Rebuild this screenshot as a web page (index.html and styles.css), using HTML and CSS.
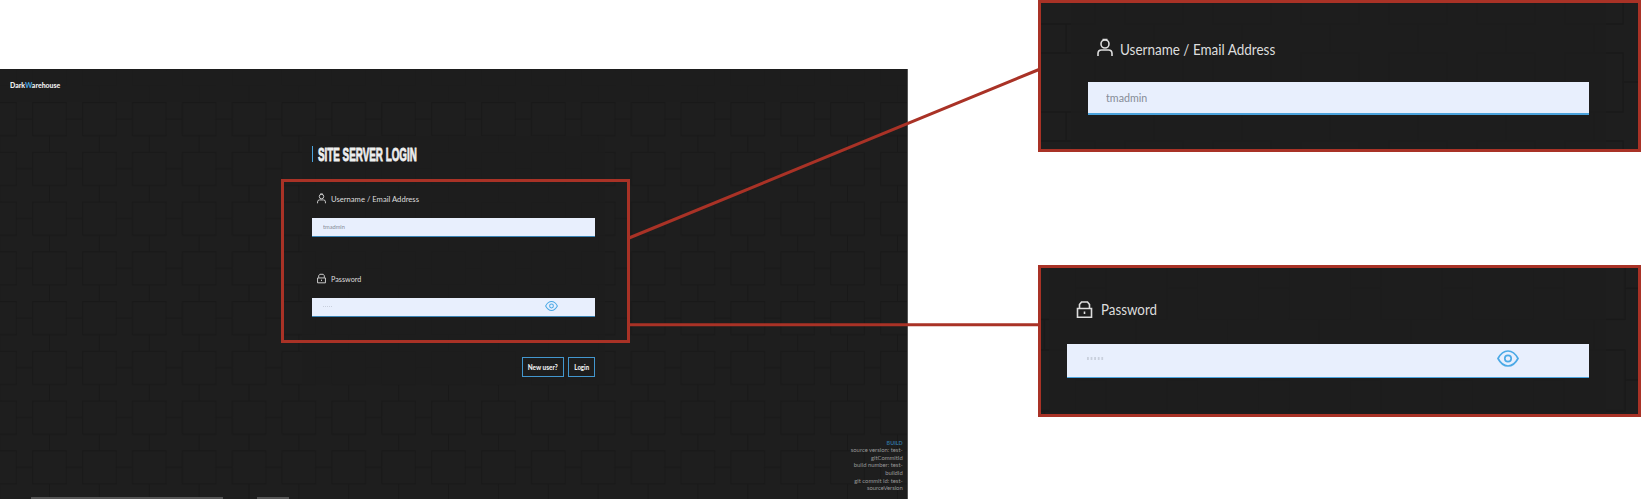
FILE: index.html
```html
<!DOCTYPE html>
<html lang="en">
<head>
<meta charset="utf-8">
<title>DarkWarehouse – Site Server Login</title>
<link rel="stylesheet" href="styles.css">
</head>
<body>
<svg class="defs" width="0" height="0" aria-hidden="true">
  <defs>
    <symbol id="user" viewBox="0 0 16 19"><circle cx="8" cy="6" r="4"/><path d="M5.500 1.500h5M1 18v-2.500q0-3.500 3.500-3.500h7q3.500 0 3.500 3.500V18"/></symbol>
    <symbol id="lock" viewBox="0 0 16 17"><path d="M1 7.500h14v8.700H1zM3 7V3.500L5 1h6l2 2.500V7"/><path d="M8 10.500v2.500"/></symbol>
    <symbol id="eye" viewBox="0 0 22 17"><path d="M1 8.500Q5 1 11 1t10 7.500Q17 16 11 16T1 8.500z"/><circle cx="11" cy="8.500" r="3.200"/></symbol>
    <pattern id="tiles" width="49.880" height="49.750" patternUnits="userSpaceOnUse" patternTransform="translate(32 33)">
      <path d="M.7.700h33.500v33H.7zM34 17h16M17.500 34v16" fill="none" stroke="#191919" stroke-width="1.200"/>
    </pattern>
    <pattern id="tiles-user" width="88" height="88" patternUnits="userSpaceOnUse" patternTransform="translate(83 49)">
      <path d="M1 1h58v59H1zM60 30h28M30 60v28" fill="none" stroke="#191919" stroke-width="1.600"/>
    </pattern>
    <pattern id="tiles-pass" width="91.600" height="91.600" patternUnits="userSpaceOnUse" patternTransform="translate(64 81)">
      <path d="M1 1h61v61H1zM62 31h30M31 62v30" fill="none" stroke="#191919" stroke-width="1.600"/>
    </pattern>
  </defs>
</svg>
<main class="board">
  <section class="shot">
    <svg class="backdrop"><rect width="100%" height="100%" fill="url(#tiles)"/></svg>
    <header class="topbar"><span class="brand">Dark<b>W</b>arehouse</span></header>
    <form class="login">
      <h1 class="title"><span>SITE SERVER LOGIN</span></h1>
      <label class="caption"><svg class="icon"><use href="#user"/></svg><span class="username-text">Username / Email Address</span></label>
      <div class="field"><span>tmadmin</span></div>
      <label class="caption second"><svg class="icon"><use href="#lock"/></svg><span class="password-text">Password</span></label>
      <div class="field"><i class="dots"></i><svg class="eye"><use href="#eye"/></svg></div>
      <div class="actions"><div class="btn new"><span>New user?</span></div><div class="btn enter"><span>Login</span></div></div>
    </form>
    <footer class="build"><b>BUILD</b><br>source version: test-<br>gitCommitId<br>build number: test-<br>buildId<br>git commit id: test-<br>sourceVersion</footer>
    <div class="strip"><i class="bar wide"></i><i class="bar"></i></div>
  </section>
  <aside class="details">
    <section class="callout user">
      <svg class="backdrop"><rect width="100%" height="100%" fill="url(#tiles-user)"/></svg>
      <div class="veil"></div>
      <div class="caption"><svg class="icon"><use href="#user"/></svg><span class="username-text">Username / Email Address</span></div>
      <div class="field"><span>tmadmin</span></div>
    </section>
    <section class="callout pass">
      <svg class="backdrop"><rect width="100%" height="100%" fill="url(#tiles-pass)"/></svg>
      <div class="veil"></div>
      <div class="caption"><svg class="icon"><use href="#lock"/></svg><span class="password-text">Password</span></div>
      <div class="field"><i class="dots"></i><svg class="eye"><use href="#eye"/></svg></div>
    </section>
  </aside>
  <svg class="marks" viewBox="0 0 1641 499"><path d="M282.500 180.500h346v161h-346zM629 238 1039 69.500M629 324.700h410"/></svg>
</main>
</body>
</html>
```
FILE: styles.css
```css
* { box-sizing: border-box; }
body { margin: 0; background: #fff; font-family: Lato, "Liberation Sans", sans-serif; }
.defs { position: absolute; }
.board { position: relative; display: flex; justify-content: space-between; width: 1641px; height: 499px; overflow: hidden; }
.board span { display: inline-block; white-space: nowrap; transform-origin: left center; }
.backdrop { position: absolute; inset: 0; width: 100%; height: 100%; }
.marks { position: absolute; inset: 0; width: 1641px; height: 499px; fill: none; stroke: #a93226; stroke-width: 3; }

.shot { position: relative; width: 908px; height: 430px; margin-top: 69px; background: #1e1e1e; border-right: 1px solid #555; }
.topbar { position: relative; height: 33px; padding: 11px 10px 0; background: rgba(30, 30, 30, .75); }
.brand { font-size: 7.500px; line-height: 12px; font-weight: 900; color: #f0f0f0; vertical-align: top; }
.topbar .brand { transform: scaleX(.925); }
.brand b { color: #4ba3dd; font-weight: 900; }
.login { position: relative; width: 303px; height: 249px; margin: 34px 0 0 302px; padding: 10px 10px 0; background: rgba(30, 30, 30, .75); }
.title { display: flex; align-items: center; height: 16px; margin: 0; padding-left: 5px; border-left: 1px solid #4ba3dd; font-family: "Liberation Sans", sans-serif; font-size: 19px; line-height: 16px; color: #eee; -webkit-text-stroke: .9px #eee; }
.title span { transform: translateY(.5px) scaleX(.518); }

.caption { display: flex; align-items: center; color: #ddd; }
.icon { fill: none; stroke: #ddd; stroke-width: 1.600; }
.eye { fill: none; stroke: #4ba9e6; stroke-width: 1.700; }
.field { display: flex; align-items: center; background: #e8effd; color: #858b96; border-bottom: 1px solid #3b84b5; }
.dots { background: repeating-linear-gradient(90deg, #c9d0dd 0 50%, transparent 50% 100%); background-size: 20% 100%; }

.login .caption { height: 16px; margin-top: 28px; padding-left: 5px; gap: 5px; font-size: 8px; }
.login .caption span { padding-top: 1px; }
.login .caption .username-text { transform: scaleX(.955); }
.login .caption .password-text { transform: scaleX(.9); }
.login .caption.second { margin-top: 33px; }
.login .icon { width: 9px; height: 11px; }
.login .field { height: 19px; margin-top: 12px; padding-left: 11px; font-size: 6.500px; }
.login .field span { padding-bottom: 1px; transform: scaleX(.87); }
.login .field + .caption.second + .field { margin-top: 12px; }
.login .dots { width: 10px; height: 1px; margin-top: -2px; }
.login .eye { width: 13px; height: 10px; margin: -2px 0 0 212px; }
.actions { display: flex; justify-content: flex-end; gap: 4px; margin-top: 40px; }
.btn { display: flex; align-items: center; justify-content: center; height: 20px; border: 1px solid #4397cf; color: #eee; font-size: 8px; font-weight: 900; }
.btn.new { width: 42px; }
.btn.enter { width: 27px; }
.board .btn span { transform-origin: center; }
.board .btn.new span { transform: scaleX(.8); }
.board .btn.enter span { transform: scaleX(.76); }

.build { position: absolute; right: 4px; bottom: 7px; text-align: right; font-size: 6.500px; line-height: 7.650px; color: #999; transform: scaleX(.9); transform-origin: right center; }
.build b { position: relative; top: 1px; color: #2f6f9b; font-weight: 700; font-size: 6px; }
.strip { position: absolute; left: 31px; bottom: 0; display: flex; gap: 34px; }
.bar { width: 32px; height: 2px; background: #555; }
.bar.wide { width: 192px; }

.details { display: flex; flex-direction: column; gap: 113px; width: 603px; }
.callout { position: relative; height: 152px; border: 3px solid #a93226; background: #1e1e1e; }
.callout > * { position: relative; }
.callout .backdrop { position: absolute; }
.callout .veil { position: absolute; inset: 0 32px 0 30px; background: rgba(30, 30, 30, .75); }
.user .caption { height: 24px; margin: 32px 0 0 56px; gap: 7px; font-size: 14.500px; }
.user .icon { width: 16px; height: 19px; }
.user .caption span { padding-top: 4px; transform: scaleX(.93); }
.user .field { height: 33px; margin: 23px 49px 0 47px; padding-left: 18px; border-bottom: 2px solid #4ba3dd; font-size: 11.500px; }
.user .field span { transform: scaleX(.93); }
.pass .caption { height: 24px; margin: 29px 0 0 35px; gap: 8px; font-size: 14.500px; }
.pass .icon { width: 17px; height: 17px; }
.pass .caption span { transform: translateY(-.5px) scaleX(.92); }
.pass .field { height: 34px; margin: 23px 49px 0 26px; padding-left: 20px; border-bottom: 1px solid #4ba3dd; }
.pass .dots { width: 18px; height: 3px; margin-top: -4px; }
.pass .eye { width: 22px; height: 17px; margin: -4px 0 0 392px; }
.pass .veil { left: 8px; }
```
